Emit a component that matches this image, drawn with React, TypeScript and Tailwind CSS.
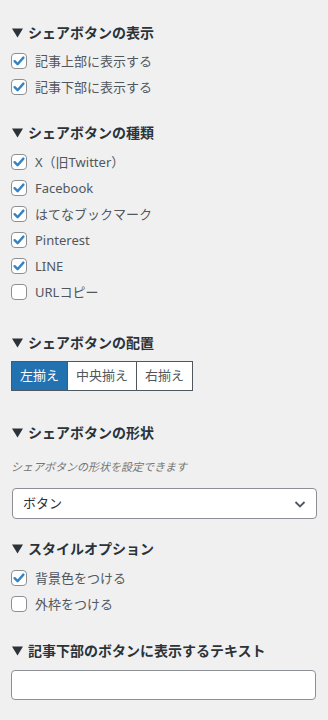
import React from "react";

const font = "font-['Noto_Sans','Noto_Sans_CJK_JP',sans-serif]";

function Heading({ children, className = "" }: { children: React.ReactNode; className?: string }) {
  return (
    <div className={`flex items-center h-5 leading-5 text-[14px] font-bold text-[#2c3338] ${className}`}>
      <svg width="11" height="10" viewBox="0 0 11 10" className="ml-[1px] mr-[5px] shrink-0">
        <polygon points="0,0.5 11,0.5 5.5,9.5" fill="#2c3338" />
      </svg>
      <span>{children}</span>
    </div>
  );
}

function Check({ label, checked }: { label: string; checked: boolean }) {
  return (
    <label className="flex items-center h-[26px]">
      <span className="w-4 h-4 rounded-[4px] border border-[#8c8f94] bg-white flex items-center justify-center shrink-0">
        {checked && (
          <svg width="14" height="14" viewBox="0 0 14 14">
            <path d="M2.6 7.2 L5.6 10.2 L11.4 3.6" fill="none" stroke="#3582c4" strokeWidth="2.4" strokeLinecap="round" strokeLinejoin="round" />
          </svg>
        )}
      </span>
      <span className="ml-2 text-[13px] leading-5 text-[#50575e]">{label}</span>
    </label>
  );
}

export default function App() {
  return (
    <div className={`${font} bg-[#f0f0f0] w-[328px] h-[720px] px-[11px] pt-[23px] flex flex-col`}>
      <Heading>シェアボタンの表示</Heading>
      <div className="mt-[5px] flex flex-col">
        <Check label="記事上部に表示する" checked />
        <Check label="記事下部に表示する" checked />
      </div>

      <Heading className="mt-[23px]">シェアボタンの種類</Heading>
      <div className="mt-[6px] flex flex-col">
        <Check label="X（旧Twitter）" checked />
        <Check label="Facebook" checked />
        <Check label="はてなブックマーク" checked />
        <Check label="Pinterest" checked />
        <Check label="LINE" checked />
        <Check label="URLコピー" checked={false} />
      </div>

      <Heading className="mt-[28px]">シェアボタンの配置</Heading>
      <div className="mt-[8px] flex h-[30px] text-[13px]">
        <button className="h-full w-[57px] border border-[#50575e] bg-[#2271b1] text-white flex items-center justify-center">左揃え</button>
        <button className="h-full w-[70px] -ml-px border border-[#50575e] bg-white text-[#50575e] flex items-center justify-center">中央揃え</button>
        <button className="h-full w-[57px] -ml-px border border-[#50575e] bg-white text-[#50575e] flex items-center justify-center">右揃え</button>
      </div>

      <Heading className="mt-[32px]">シェアボタンの形状</Heading>
      <div className="mt-[16px] text-[11px] leading-4 italic text-[#757575]">シェアボタンの形状を設定できます</div>
      <div className="mt-[13px] ml-px h-[31px] w-[305px] rounded-[4px] border border-[#8c8f94] bg-white flex items-center justify-between pl-[10px] pr-[9px]">
        <span className="text-[13px] text-[#2c3338]">ボタン</span>
        <svg width="14" height="14" viewBox="0 0 14 14">
          <path d="M2.5 5 L7 9.5 L11.5 5" fill="none" stroke="#50575e" strokeWidth="1.8" />
        </svg>
      </div>

      <Heading className="mt-[20px]">スタイルオプション</Heading>
      <div className="mt-[6px] flex flex-col">
        <Check label="背景色をつける" checked />
        <Check label="外枠をつける" checked={false} />
      </div>

      <Heading className="mt-[24px]">記事下部のボタンに表示するテキスト</Heading>
      <input className="mt-[9px] h-[30px] w-[305px] rounded-[4px] border border-[#8c8f94] bg-white outline-none" />
    </div>
  );
}
